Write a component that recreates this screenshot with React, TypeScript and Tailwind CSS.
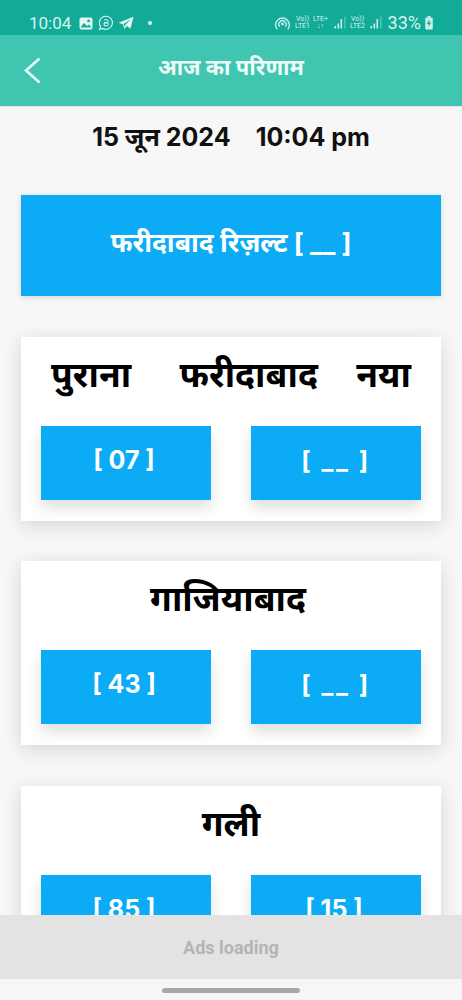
const latin = "font-['Inter','Noto_Sans','Noto_Sans_Devanagari',sans-serif]";

const Signal = ({ className }: { className: string }) => (
  <svg className={className} width="15" height="14" viewBox="0 0 14 14" fill="#cdeee8">
    <rect x="1" y="10" width="1.6" height="2.5" />
    <rect x="4" y="7.5" width="1.6" height="5" />
    <rect x="7" y="3" width="1.6" height="9.5" />
    <rect x="11" y="0.5" width="0.9" height="12" opacity="0.6" />
  </svg>
);

const StatusBar = () => (
  <div className="h-[35px] bg-[#11ab98] flex items-center justify-between pl-[29px] pr-[28px] pt-[11px] text-[#d8f3ee] font-['Roboto',sans-serif]">
    <div className="flex items-center">
      <span className="text-[17px] leading-none">10:04</span>
      <svg className="ml-[8px]" width="14" height="13" viewBox="0 0 14 13">
        <rect x="0.5" y="0.5" width="13" height="12" rx="2" fill="#e4f6f3" />
        <circle cx="9.6" cy="3.9" r="1.4" fill="#11ab98" />
        <path d="M1.5 10.5 L5 6 L8 9 L10 7.5 L12.5 10.5 Z" fill="#11ab98" />
      </svg>
      <svg className="ml-[5px]" width="16" height="16" viewBox="0 0 16 16" fill="none" stroke="#e4f6f3">
        <path d="M8 1.2a6.5 6.5 0 1 1-3.2 12.2L1.6 14.4l1-3A6.5 6.5 0 0 1 8 1.2Z" strokeWidth="1.1" />
        <path d="M6.2 4.8h2.4a1.4 1.4 0 0 1 0 3H6.2m0 0h2.8a1.5 1.5 0 0 1 0 3H6.2Z" strokeWidth="1" />
      </svg>
      <svg className="ml-[4px]" width="16" height="14" viewBox="0 0 15 13" fill="#e4f6f3">
        <path d="M14.6 0.6 L0.4 6.3 L4.6 7.7 L6 12.2 L8.3 9.4 L11.6 11.8 Z M5.4 7.4 L11.8 3.2 L6.8 8.3 L6.3 10.2 Z" />
      </svg>
      <span className="ml-[14px] w-[4px] h-[4px] rounded-full bg-[#e4f6f3]" />
    </div>
    <div className="flex items-center">
      <svg width="17" height="15" viewBox="0 0 16 14" fill="none" stroke="#cdeee8" strokeWidth="1.3">
        <path d="M3 12.5a6.5 6.5 0 1 1 10 0" />
        <path d="M5.4 10a3.4 3.4 0 1 1 5.2 0" />
        <circle cx="8" cy="7.5" r="0.7" fill="#cdeee8" />
      </svg>
      <div className="ml-[3px] flex flex-col items-center text-[7px] leading-[7px] w-[18px]">
        <span>Vo))</span>
        <span>LTE1</span>
      </div>
      <div className="flex flex-col items-center text-[7px] leading-[7px] w-[18px]">
        <span>LTE+</span>
        <span>↓↑</span>
      </div>
      <Signal className="ml-[3px]" />
      <div className="ml-[1px] flex flex-col items-center text-[7px] leading-[7px] w-[18px]">
        <span>Vo))</span>
        <span>LTE2</span>
      </div>
      <Signal className="ml-[2px]" />
      <span className="ml-[4px] text-[18px] leading-none">33%</span>
      <svg className="ml-[3px]" width="10" height="14" viewBox="0 0 8 13" fill="#cdeee8">
        <rect x="2.5" y="0" width="3" height="1.5" />
        <rect x="0.5" y="1.5" width="7" height="11" rx="1" />
        <path d="M4.4 3 L2 7.5 H3.8 L3.4 10.5 L6 6 H4.2 Z" fill="#11ab98" />
      </svg>
    </div>
  </div>
);

const Header = () => (
  <div className="relative h-[71px] bg-[#40c6b0] flex items-center justify-center pb-[6px] shadow-[0_1px_1px_rgba(0,0,0,0.08)]">
    <svg className="absolute left-[24px] top-[22px]" width="17" height="27" viewBox="0 0 17 27" fill="none" stroke="#eefaf8" strokeWidth="2.6">
      <polyline points="15.5,1.5 2,13.5 15.5,25.5" />
    </svg>
    <span className={`text-[22px] font-bold text-[#eefaf8] ${latin}`}>आज का परिणाम</span>
  </div>
);

const ResultBox = ({ value }: { value: string }) => (
  <div className="w-[170px] h-[74px] bg-[#0bacf5] flex items-center justify-center pr-[4px] shadow-[0_8px_14px_rgba(0,0,0,0.13)]">
    <span className={`text-white text-[25px] font-bold pb-[5px] ${latin}`}>{value}</span>
  </div>
);

const EmptyResultBox = () => (
  <div className="w-[170px] h-[74px] bg-[#0bacf5] flex items-center justify-center shadow-[0_8px_14px_rgba(0,0,0,0.13)]">
    <span className={`text-white text-[25px] font-bold pb-[5px] tracking-[2.5px] ${latin}`}>[ __ ]</span>
  </div>
);

const GameCard = ({ title, children }: { title: React.ReactNode; children: React.ReactNode }) => (
  <div className="bg-white h-[184px] shrink-0 px-[20px] last:mt-px shadow-[0_4px_18px_rgba(0,0,0,0.14)]">
    <div className="h-[89px] flex items-center justify-center pb-[13px]">{title}</div>
    <div className="flex justify-between">{children}</div>
  </div>
);

const titleCls = `text-[35.5px] font-bold text-black ${latin}`;

export default function App() {
  return (
    <div className="w-[462px] h-[1000px] flex flex-col overflow-hidden bg-[#f7f7f8]">
      <StatusBar />
      <Header />
      <div className="flex-1 min-h-0 overflow-hidden px-[21px]">
        <div className={`h-[64px] flex items-center justify-center gap-[25px] text-[25px] font-bold text-[#111] ${latin}`}>
          <span>15 जून 2024</span>
          <span>10:04 pm</span>
        </div>
        <div className="mt-[25px] h-[101px] bg-[#0bacf5] flex items-center justify-center shadow-[0_1px_6px_rgba(0,0,0,0.15)]">
          <span className={`text-white text-[26.5px] font-bold pb-[5px] ${latin}`}>फरीदाबाद रिज़ल्ट [ __ ]</span>
        </div>
        <div className="mt-[41px] flex flex-col gap-[40px]">
          <GameCard
            title={
              <div className="w-full flex justify-between px-[10px]">
                <span className={titleCls}>पुराना</span>
                <span className={`${titleCls} ml-[10px]`}>फरीदाबाद</span>
                <span className={titleCls}>नया</span>
              </div>
            }
          >
            <ResultBox value="[ 07 ]" />
            <EmptyResultBox />
          </GameCard>
          <GameCard title={<span className={`${titleCls} mr-[6px]`}>गाजियाबाद</span>}>
            <ResultBox value="[ 43 ]" />
            <EmptyResultBox />
          </GameCard>
          <GameCard title={<span className={titleCls}>गली</span>}>
            <ResultBox value="[ 85 ]" />
            <ResultBox value="[ 15 ]" />
          </GameCard>
        </div>
      </div>
      <div className="h-[64px] shrink-0 bg-[#e3e3e4] flex items-center justify-center">
        <span className="text-[18px] font-bold text-[#b4b4b7] font-['Roboto',sans-serif]">Ads loading</span>
      </div>
      <div className="h-[21px] shrink-0 bg-[#f6f6f8] flex justify-center pt-[9px]">
        <div className="w-[138px] h-[5px] rounded-full bg-[#a8a8aa]" />
      </div>
    </div>
  );
}
